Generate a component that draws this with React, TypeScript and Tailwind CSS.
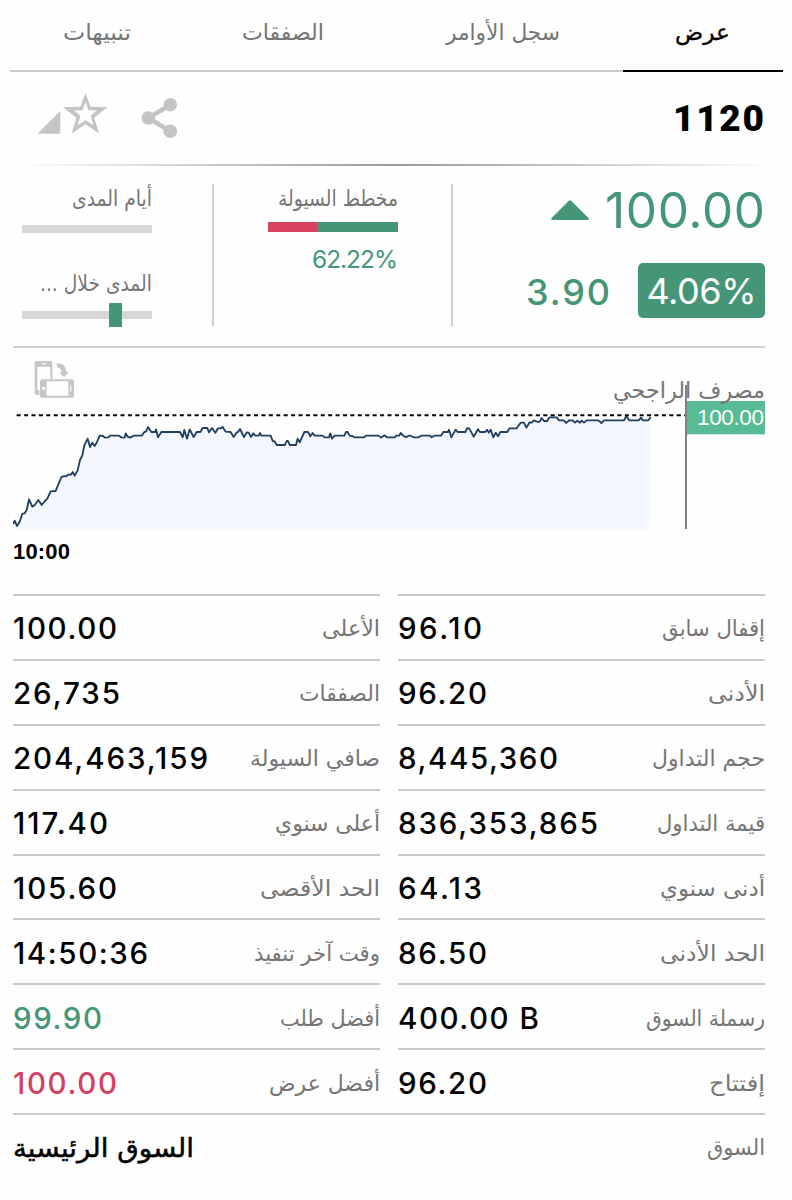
import { useLayoutEffect, useRef, useState } from "react";
import type { ReactNode } from "react";

type FitProps = { w: number; className?: string; rtl?: boolean; children: ReactNode };

/**
 * A single line of text set to an exact width: Arabic is scaled, because
 * tracking would break its joins; figures are tracked.
 */
function Fit({ w, className = "", rtl = false, children }: FitProps) {
  const ref = useRef<HTMLSpanElement>(null);
  const [natural, setNatural] = useState(0);
  const count = String(children).length;
  useLayoutEffect(() => {
    if (ref.current) {
      ref.current.style.letterSpacing = "0px";
      setNatural(ref.current.getBoundingClientRect().width);
    }
  }, []);
  const style = !natural
    ? undefined
    : rtl
      ? { transform: `scaleX(${w / natural})` }
      : { letterSpacing: `${(w - natural) / (count - 1)}px` };
  return (
    <span className="flex shrink-0 justify-start" dir="ltr" style={{ width: w }}>
      <span
        ref={ref}
        dir={rtl ? "rtl" : "ltr"}
        className={`block shrink-0 origin-left whitespace-nowrap ${className}`}
        style={style}
      >
        {children}
      </span>
    </span>
  );
}

const AR = "font-['DejaVu_Sans',sans-serif]";
const LABEL = "font-['DejaVu_Sans',sans-serif] text-[22px] leading-[30px] text-[#757575]";

type Cell = { label: string; lw: number; value: string; vw: number; tone?: string };

const right: Cell[] = [
  { label: "إقفال سابق", lw: 103, value: "96.10", vw: 84 },
  { label: "الأدنى", lw: 57, value: "96.20", vw: 89 },
  { label: "حجم التداول", lw: 113, value: "8,445,360", vw: 160 },
  { label: "قيمة التداول", lw: 108, value: "836,353,865", vw: 200 },
  { label: "أدنى سنوي", lw: 105, value: "64.13", vw: 84 },
  { label: "الحد الأدنى", lw: 105, value: "86.50", vw: 89 },
  { label: "رسملة السوق", lw: 119, value: "400.00 B", vw: 141 },
  { label: "إفتتاح", lw: 56, value: "96.20", vw: 89 },
];

const left: Cell[] = [
  { label: "الأعلى", lw: 58, value: "100.00", vw: 104 },
  { label: "الصفقات", lw: 81, value: "26,735", vw: 107 },
  { label: "صافي السيولة", lw: 130, value: "204,463,159", vw: 195 },
  { label: "أعلى سنوي", lw: 105, value: "117.40", vw: 95 },
  { label: "الحد الأقصى", lw: 120, value: "105.60", vw: 104 },
  { label: "وقت آخر تنفيذ", lw: 126, value: "14:50:36", vw: 135 },
  { label: "أفضل طلب", lw: 100, value: "99.90", vw: 89, tone: "text-[#459577]" },
  { label: "أفضل عرض", lw: 111, value: "100.00", vw: 104, tone: "text-[#d4405f]" },
];

function Column({ cells, className }: { cells: Cell[]; className: string }) {
  return (
    <div className={className}>
      {cells.map((c) => (
        <div key={c.label} className="flex h-[64.88px] items-center justify-between border-t-2 border-[#c9c9c9] pt-[2px]">
          <Fit w={c.vw} className={`font-['Inter',sans-serif] text-[29.5px] font-medium leading-[36px] ${c.tone ?? "text-black"}`}>
            {c.value}
          </Fit>
          <div className="pt-[2px]">
            <Fit w={c.lw} rtl className={LABEL}>
              {c.label}
            </Fit>
          </div>
        </div>
      ))}
    </div>
  );
}

/* Price line, three units to a pixel. */
const LINE =
  "40,522 44,512 51,528 60,513 67,491 74,490 80,480 87,448 97,470 104,465 115,450 125,465 135,453 142,446 152,424 167,423 175,403 185,380 200,378 204,374 213,374 218,366 224,377 233,361 240,330 247,316 253,286 263,266 270,291 277,278 284,288 291,276 299,257 309,258 315,263 325,262 330,257 357,257 364,262 374,263 377,250 383,260 390,263 402,257 425,257 433,246 438,245 444,231 454,246 466,246 468,238 474,262 484,246 540,246 548,262 553,240 561,266 569,238 581,261 590,246 601,246 608,234 622,234 627,247 636,234 646,248 654,235 663,235 668,231 677,245 692,246 701,261 710,247 714,246 720,237 732,261 741,247 746,248 753,261 760,250 766,257 776,257 780,249 784,257 " +
  "812,257 818,273 824,274 830,285 855,285 860,273 864,273 869,285 888,285 893,266 899,277 913,246 924,246 931,259 938,249 944,257 968,257 974,262 987,262 991,250 996,266 1004,257 1033,257 1038,246 1043,246 1049,257 1057,258 1063,262 1092,262 1098,257 1136,257 1143,263 1153,256 1161,262 1184,262 1189,257 1198,257 1202,249 1210,257 1218,262 1226,257 1232,257 1240,262 1256,262 1263,257 1290,257 1295,262 1303,257 1323,257 1330,246 1344,246 1347,239 1354,262 1367,239 1373,246 1396,246 1402,234 1408,236 1421,260 1434,238 1440,246 1456,246 1461,239 1466,248 1472,239 1480,262 1487,248 1494,259 1501,246 1522,246 1528,235 1550,235 1562,218 1572,218 " +
  "1579,233 1589,217 1595,218 1602,211 1613,216 1620,214 1625,204 1632,213 1642,213 1648,202 1670,202 1677,211 1691,211 1698,219 1708,211 1718,211 1725,218 1732,212 1740,218 1745,212 1752,218 1760,211 1795,211 1804,219 1812,211 1872,211 1879,198 1888,211 1916,211 1923,203 1929,211 1945,211 1952,201";

function Chart() {
  return (
    <section className="relative mr-[27px] ml-[13px] h-[248px] border-t-2 border-[#cfcfcf]">
      <svg className="block" width="752" height="245" viewBox="39 -6 2256 735">
        <polygon points={`40,537 ${LINE} 1949,537`} fill="#f4f7fe" />
        <polyline points={LINE} fill="none" stroke="#213f5e" strokeWidth="5.5" strokeLinejoin="round" />
        <line x1="50" y1="195.5" x2="2057" y2="195.5" stroke="#000" strokeWidth="6" strokeDasharray="12 10.25" />
        <rect x="2061" y="153" width="234" height="100" fill="#57bb94" />
        <g fill="#c6c6c6">
          <path fillRule="evenodd" d="M111 33h40q6 0 6 6v49h-6V50h-39v70h6v15h-7q-7 0-7-7V40q0-7 7-7zm13 7v3h15v-3z" />
          <path fillRule="evenodd" d="M126 88h90q6 0 6 6v43q0 6-6 6h-90q-6 0-6-6V94q0-6 6-6zm14 6v43h65V94zm-9 16a5 5 0 1 0 .1 0zm80-4v19h3v-19z" />
          <path d="M171 39q26 1 28 26h7l-14 17-15-15h8q-1-13-15-16z" />
        </g>
      </svg>
      <div className="absolute right-0 top-[27px]">
        <Fit w={152} rtl className={`${AR} text-[23px] leading-[30px] text-[#757575]`}>
          مصرف الراجحي
        </Fit>
      </div>
      <div className="absolute left-[672px] top-[37px] h-[144px] w-[2px] bg-[#808080]" />
      <div className="absolute right-px top-[57px]">
        <Fit w={67} className="font-['Liberation_Sans',sans-serif] text-[22.5px] leading-[26px] text-white">
          100.00
        </Fit>
      </div>
      <div className="absolute left-0 top-[191px]">
        <Fit w={57} className="font-['Liberation_Sans',sans-serif] text-[22px] font-bold leading-[26px] text-black">
          10:00
        </Fit>
      </div>
    </section>
  );
}

export default function App() {
  return (
    <main className="h-[1200px] w-[792px] overflow-hidden bg-[#fefefe]">
      <nav className="flex h-[72px] pl-[10px] pr-[9px]">
        <div className="flex w-[613px] border-b-2 border-[#cbcbcb] pt-[18px]">
          <div className="pl-[53px]">
            <Fit w={68} rtl className={LABEL}>تنبيهات</Fit>
          </div>
          <div className="pl-[111px]">
            <Fit w={82} rtl className={LABEL}>الصفقات</Fit>
          </div>
          <div className="pl-[122px]">
            <Fit w={114} rtl className={LABEL}>سجل الأوامر</Fit>
          </div>
        </div>
        <div className="flex flex-1 border-b-2 border-black pl-[52px] pt-[18px]">
          <Fit w={55} rtl className={`${AR} text-[22px] leading-[30px] text-black [-webkit-text-stroke:0.3px_black]`}>عرض</Fit>
        </div>
      </nav>

      <header className="flex h-[92px] items-start justify-between pl-[37px] pr-[28px]">
        <svg width="142" height="46" viewBox="0 0 142 46" className="mt-[20px]" fill="#c4c4c4">
          <path d="M.5 41.8 23.3 19v22.8z" />
          <path
            fillRule="evenodd"
            d="m48.5 1 5 13.8 17 .4-13.3 10.5 5 15.8-13.7-9.3-13.8 9.3 4.7-15.8L26 15.2l17.4-.4zM48.5 9.8 45.5 18.2 37 18.4 43.4 23.8 40.8 33 48.5 28.2 56.4 33 53.6 23.8 60 18.4 51.5 18.2z"
          />
          <g>
            <circle cx="133.3" cy="12.8" r="6.8" />
            <circle cx="111.3" cy="26" r="6.8" />
            <circle cx="133.3" cy="39.2" r="6.8" />
            <path d="m133.3 12.8-22 13.2 22 13.2" fill="none" stroke="#c4c4c4" strokeWidth="4.6" />
          </g>
        </svg>
        <div className="pt-[25px]">
          <Fit w={91} className="font-['Roboto',sans-serif] text-[37px] font-black leading-[44px] text-black">1120</Fit>
        </div>
      </header>
      <div className="mx-[18px] h-[2px] bg-linear-to-r from-transparent via-[#999] to-transparent" />

      <section className="flex h-[180px] pl-[22px] pr-[27px] pt-[18px]">
        <div className="flex h-[142px] w-[192px] flex-col border-r-2 border-[#cecece]">
          <div className="flex w-[130px] justify-end">
            <Fit w={80} rtl className={LABEL}>أيام المدى</Fit>
          </div>
          <div className="mt-[11px] h-[8px] w-[130px] shrink-0 bg-[#d7d7d7]" />
          <div className="mt-[36px] flex w-[130px] justify-end">
            <Fit w={112} rtl className={LABEL}>المدى خلال ...</Fit>
          </div>
          <div className="mt-[4px] flex h-[24px] w-[130px] shrink-0 items-center">
            <div className="h-[8px] w-[87px] bg-[#d7d7d7]" />
            <div className="h-[24px] w-[13px] bg-[#459577]" />
            <div className="h-[8px] w-[30px] bg-[#d7d7d7]" />
          </div>
        </div>
        <div className="flex h-[142px] w-[239px] flex-col items-end border-r-2 border-[#cecece] pr-[53px]">
          <Fit w={120} rtl className={LABEL}>مخطط السيولة</Fit>
          <div className="mt-[8px] flex h-[10px] w-[130px]">
            <div className="w-[49px] bg-[#d8415f]" />
            <div className="flex-1 bg-[#459577]" />
          </div>
          <div className="mt-[12px]">
            <Fit w={86} className="font-['Inter',sans-serif] text-[24.5px] leading-[30px] text-[#459577]">62.22%</Fit>
          </div>
        </div>
        <div className="flex flex-1 flex-col items-end">
          <div className="flex h-[52px] items-center">
            <svg width="38" height="20" viewBox="0 0 38 20" className="mr-[16px]">
              <path d="M17.6.9q1.4-1.3 2.8 0l17 17q1.2 1.9-1 2.1H1.6q-2.2-.2-1-2.1z" fill="#459577" />
            </svg>
            <Fit w={160} className="font-['Inter',sans-serif] text-[49.5px] leading-[52px] text-[#459577]">100.00</Fit>
          </div>
          <div className="mt-[27px] flex h-[55px] items-center">
            <Fit w={84} className="mt-[2px] font-['Inter',sans-serif] text-[36px] font-medium leading-[44px] text-[#459577]">3.90</Fit>
            <div className="ml-[28px] flex h-[55px] w-[127px] items-center justify-center rounded-[5px] bg-[#459577]">
              <Fit w={110} className="font-['Inter',sans-serif] text-[36px] leading-[44px] text-white">4.06%</Fit>
            </div>
          </div>
        </div>
      </section>

      <Chart />

      <section className="flex pl-[13px] pr-[27px]">
        <Column cells={left} className="w-[367px]" />
        <Column cells={right} className="ml-[18px] flex-1" />
      </section>
      <footer className="mr-[27px] ml-[13px] flex h-[66px] items-center justify-between border-t-2 border-[#c9c9c9] pt-[2px]">
        <Fit w={181} rtl className={`${AR} text-[26px] leading-[34px] text-black [-webkit-text-stroke:0.5px_black]`}>السوق الرئيسية</Fit>
        <Fit w={58} rtl className={LABEL}>السوق</Fit>
      </footer>
    </main>
  );
}
